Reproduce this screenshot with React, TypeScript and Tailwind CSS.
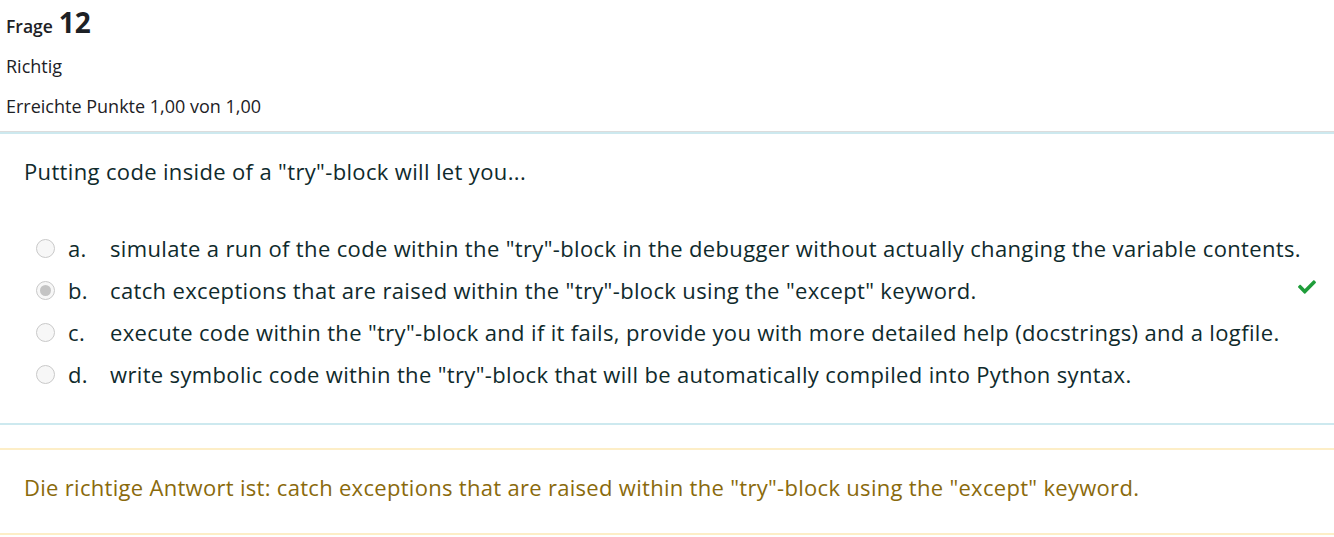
import React from "react";

const options = [
  { letter: "a.", text: 'simulate a run of the code within the "try"-block in the debugger without actually changing the variable contents.' },
  { letter: "b.", text: 'catch exceptions that are raised within the "try"-block using the "except" keyword.', checked: true },
  { letter: "c.", text: 'execute code within the "try"-block and if it fails, provide you with more detailed help (docstrings) and a logfile.' },
  { letter: "d.", text: 'write symbolic code within the "try"-block that will be automatically compiled into Python syntax.' },
];

function Radio({ checked }: { checked?: boolean }) {
  return (
    <span className="flex h-[19px] w-[19px] items-center justify-center rounded-full border border-[#c9c9c9] bg-[#f7f7f7]">
      {checked && <span className="h-[11px] w-[11px] rounded-full bg-[#c4c4c4]" />}
    </span>
  );
}

export default function App() {
  return (
    <div className="w-[1334px] h-[537px] overflow-hidden bg-white text-[#1d2125] font-['Open_Sans',sans-serif]">
      <div className="h-[132px] border-b border-[#dcdcdc] px-[6px]">
        <div className="flex items-baseline gap-[6px] pt-[4px] h-[46px]">
          <span className="text-[17.5px] font-semibold">Frage</span>
          <span className="text-[28px] font-bold leading-[36px]">12</span>
        </div>
        <div className="text-[18px] leading-[40px]">Richtig</div>
        <div className="text-[18px] leading-[40px]">Erreichte Punkte 1,00 von 1,00</div>
      </div>

      <div className="h-[293px] border-y-2 border-[#cde9ef] pl-[24px] pr-[16px] tracking-[0.35px]">
        <p className="pt-[22px] text-[22px] leading-[30px] text-[#0f2a2c]">
          Putting code inside of a "try"-block will let you...
        </p>
        <div className="mt-[41px] flex flex-col">
          {options.map((o) => (
            <div key={o.letter} className="flex h-[42px] items-center text-[22px] text-[#0f2a2c]">
              <span className="ml-[12px] w-[32px]">
                <Radio checked={o.checked} />
              </span>
              <span className="w-[42px]">{o.letter}</span>
              <span className="flex-1 whitespace-nowrap">{o.text}</span>
              {o.checked && (
                <svg className="mb-[6px] h-[18px] w-[22px] text-[#1f9d3a]" viewBox="0 0 512 512" fill="currentColor">
                  <path d="M173.9 439.4l-166.4-166.4c-10-10-10-26.2 0-36.2l36.2-36.2c10-10 26.2-10 36.2 0L192 312.7 432.1 72.6c10-10 26.2-10 36.2 0l36.2 36.2c10 10 10 26.2 0 36.2L210.1 439.4c-10 10-26.2 10-36.2 0z" />
                </svg>
              )}
            </div>
          ))}
        </div>
      </div>

      <div className="mt-[23px] h-[87px] border-y-2 border-[#fdeec7] pl-[24px] pt-[22px] text-[22px] leading-[30px] tracking-[0.3px] text-[#8a6a0c]">
        Die richtige Antwort ist: catch exceptions that are raised within the "try"-block using the "except" keyword.
      </div>
    </div>
  );
}
